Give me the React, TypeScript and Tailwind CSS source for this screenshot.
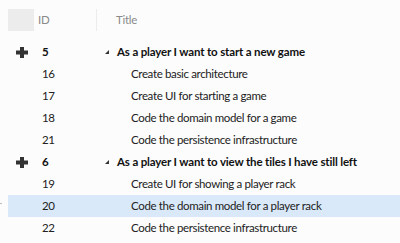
import React from "react";

type Row = { id: string; title: string; parent?: boolean; selected?: boolean };

const rows: Row[] = [
  { id: "5", title: "As a player I want to start a new game", parent: true },
  { id: "16", title: "Create basic architecture" },
  { id: "17", title: "Create UI for starting a game" },
  { id: "18", title: "Code the domain model for a game" },
  { id: "21", title: "Code the persistence infrastructure" },
  { id: "6", title: "As a player I want to view the tiles I have still left", parent: true },
  { id: "19", title: "Create UI for showing a player rack" },
  { id: "20", title: "Code the domain model for a player rack", selected: true },
  { id: "22", title: "Code the persistence infrastructure" },
];

function Plus() {
  return (
    <svg width="12" height="11" viewBox="0 0 12 11" className="block">
      <rect x="4" y="0" width="4" height="11" fill="#333" />
      <rect x="0" y="3.5" width="12" height="4" fill="#333" />
    </svg>
  );
}

function Tri() {
  return (
    <svg width="4" height="4" viewBox="0 0 4 4" className="block">
      <polygon points="4,0 4,4 0,4" fill="#333" />
    </svg>
  );
}

export default function App() {
  return (
    <div
      className="w-[400px] h-[243px] bg-[#fcfcfc] overflow-hidden relative text-[11.5px] tracking-[-0.3px] whitespace-nowrap"
      style={{ fontFamily: 'Lato, "Noto Sans", sans-serif' }}
    >
      <div className="h-[41px] pt-[9px] flex">
        <div className="w-[8px]" />
        <div className="w-[26px] h-[22px] bg-[#ececec]" />
        <div className="w-[62px] h-[22px] flex items-center pl-[4px] text-[#8a8a8a]">ID</div>
        <div className="w-px h-[22px] bg-[#ececec]" />
        <div className="h-[22px] flex items-center pl-[19px] text-[#8a8a8a]">Title</div>
      </div>
      {rows.map((r) => (
        <div
          key={r.id}
          className={`h-[22px] flex items-center ml-[8px] ${r.selected ? "bg-[#dae9f9]" : ""}`}
        >
          <div className="w-[26px] flex justify-center pl-[1px]">{r.parent ? <Plus /> : null}</div>
          <div
            className={`w-[62px] pl-[8px] ${r.parent ? "font-bold text-[#111]" : "text-[#222]"}`}
          >
            {r.id}
          </div>
          {r.parent ? (
            <div className="flex items-center">
              <div className="w-[13px] pl-[9px]">
                <Tri />
              </div>
              <div className="font-bold text-[#111] pl-[8px] tracking-[-0.15px]">{r.title}</div>
            </div>
          ) : (
            <div className="pl-[35px] text-[#222] tracking-[-0.35px]">{r.title}</div>
          )}
        </div>
      ))}
      <div className="absolute left-0 top-[203px] w-[2px] h-px bg-[#bbb]" />
    </div>
  );
}
